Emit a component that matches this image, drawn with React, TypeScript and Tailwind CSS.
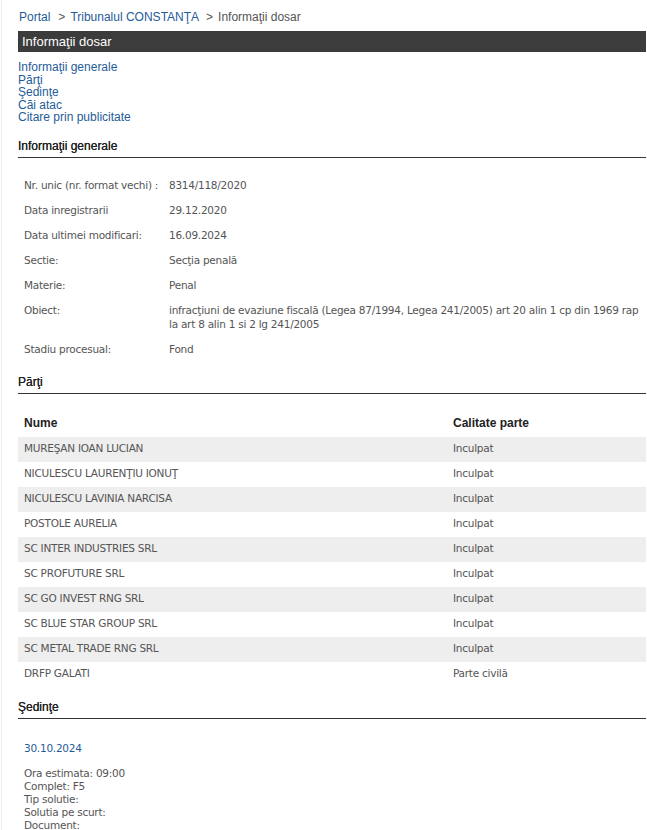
import React from "react";

const info: { label: string; value: React.ReactNode }[] = [
  { label: "Nr. unic (nr. format vechi) :", value: "8314/118/2020" },
  { label: "Data inregistrarii", value: "29.12.2020" },
  { label: "Data ultimei modificari:", value: "16.09.2024" },
  { label: "Sectie:", value: "Secţia penală" },
  { label: "Materie:", value: "Penal" },
  {
    label: "Obiect:",
    value: (
      <>
        infracţiuni de evaziune fiscală (Legea 87/1994, Legea 241/2005) art 20 alin 1 cp din 1969 rap
        <br />
        la art 8 alin 1 si 2 lg 241/2005
      </>
    ),
  },
  { label: "Stadiu procesual:", value: "Fond" },
];

const parti = [
  ["MUREŞAN IOAN LUCIAN", "Inculpat"],
  ["NICULESCU LAURENŢIU IONUŢ", "Inculpat"],
  ["NICULESCU LAVINIA NARCISA", "Inculpat"],
  ["POSTOLE AURELIA", "Inculpat"],
  ["SC INTER INDUSTRIES SRL", "Inculpat"],
  ["SC PROFUTURE SRL", "Inculpat"],
  ["SC GO INVEST RNG SRL", "Inculpat"],
  ["SC BLUE STAR GROUP SRL", "Inculpat"],
  ["SC METAL TRADE RNG SRL", "Inculpat"],
  ["DRFP GALATI", "Parte civilă"],
];

// Tahoma look-alike: DejaVu Sans a size down, slightly tightened
const tahoma = "font-['Tahoma','DejaVu_Sans',sans-serif] text-[10.5px] tracking-[-0.25px]";

function SectionTitle({ children }: { children: React.ReactNode }) {
  return (
    <h3 className="border-b border-[#333] pb-[4px] text-[12px] leading-[14px] text-[#222] [text-shadow:0_0_0.3px_#222]">
      {children}
    </h3>
  );
}

export default function App() {
  return (
    <div className="h-[830px] overflow-hidden bg-white font-['Liberation_Sans',Arial,sans-serif]">
      <div className="ml-[1px] min-h-[830px] border-l border-[#ececec] pl-[16px] pr-[1px]">
        <div className="pt-[10px] text-[12px] leading-[14px] text-[#555]">
          <span className="ml-[1px] text-[#1f5c99]">Portal</span>
          <span className="ml-[8px] mr-[5px]">&gt;</span>
          <span className="text-[#1f5c99]">Tribunalul CONSTANŢA</span>
          <span className="ml-[7px] mr-[5px]">&gt;</span>
          <span>Informaţii dosar</span>
        </div>

        <div className="mt-[7px] flex h-[21px] items-center bg-[#3c3c3c] pl-[4px] text-[13px] text-white">
          Informaţii dosar
        </div>

        <nav className="mt-[9px] flex flex-col text-[12px] leading-[12.5px] text-[#1f5c99]">
          <a>Informaţii generale</a>
          <a>Părţi</a>
          <a>Şedinţe</a>
          <a>Căi atac</a>
          <a>Citare prin publicitate</a>
        </nav>

        <div className="mt-[15px]">
          <SectionTitle>Informaţii generale</SectionTitle>
          <div className={`${tahoma} mt-[15px] leading-[14px] text-[#555]`}>
            {info.map((row) => (
              <div key={row.label} className="flex py-[5.5px]">
                <div className="w-[151px] shrink-0 pl-[6px]">{row.label}</div>
                <div className="flex-1">{row.value}</div>
              </div>
            ))}
          </div>
        </div>

        <div className="mt-[13px]">
          <SectionTitle>Părţi</SectionTitle>
          <table className="mt-[16px] w-full border-collapse text-left">
            <thead>
              <tr className="h-[27px] text-[12px] text-[#222]">
                <th className="w-[429px] pl-[6px] font-bold">Nume</th>
                <th className="pl-[6px] font-bold">Calitate parte</th>
              </tr>
            </thead>
            <tbody className={`${tahoma} text-[#555]`}>
              {parti.map(([nume, calitate], i) => (
                <tr key={nume} className={`h-[25px] ${i % 2 === 0 ? "bg-[#eeeeee]" : "bg-white"}`}>
                  <td className="pl-[6px]">{nume}</td>
                  <td className="pl-[6px]">{calitate}</td>
                </tr>
              ))}
            </tbody>
          </table>
        </div>

        <div className="mt-[13px]">
          <SectionTitle>Şedinţe</SectionTitle>
          <div className={`${tahoma} pl-[6px] text-[#555]`}>
            <div className="mt-[22px] leading-[14px] text-[#1f5c99]">30.10.2024</div>
            <div className="mt-[12px] leading-[13px]">
              <div>Ora estimata: 09:00</div>
              <div>Complet: F5</div>
              <div>Tip solutie:</div>
              <div>Solutia pe scurt:</div>
              <div>Document:</div>
            </div>
          </div>
        </div>
      </div>
    </div>
  );
}
